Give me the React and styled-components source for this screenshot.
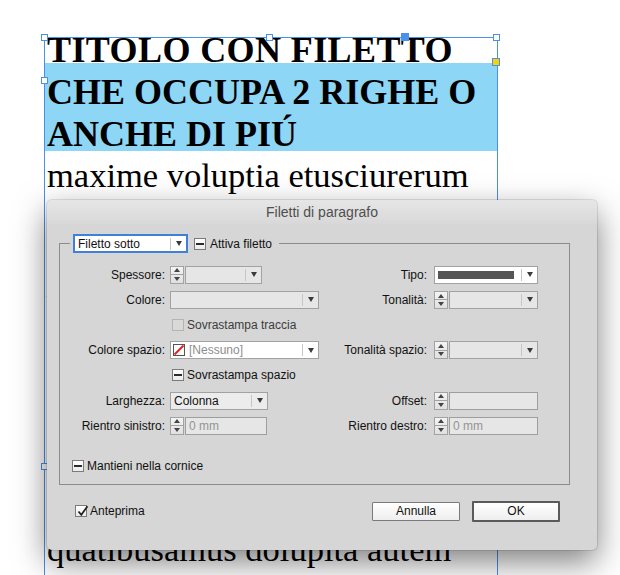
import React from 'react';
import styled, { createGlobalStyle } from 'styled-components';

const GlobalStyle = createGlobalStyle`
  html, body { margin: 0; padding: 0; background: #fff; }
  body { width: 620px; height: 575px; overflow: hidden; }
`;

const Page = styled.div`
  position: relative;
  width: 620px;
  height: 575px;
  overflow: hidden;
  background: #fff;
`;

/* document text frame */

const TextFrame = styled.div`
  margin: 37px 0 0 44px;
  width: 452px;
  height: 620px;
  border: 1px solid #4b8fe8;
  border-bottom: none;
  font-family: "Liberation Serif", "Times New Roman", serif;
  color: #000;
`;

const Title = styled.div`
  margin-top: -9px;
  font-size: 36px;
  font-weight: 700;
  line-height: 42px;
  white-space: nowrap;
`;

const TitleLine = styled.div`
  padding-left: 2px;
  letter-spacing: ${p => p.$ls || 0}px;
`;

const Highlight = styled.div`
  margin-top: -8px;
  padding-top: 8px;
  background: linear-gradient(#8ed6f5, #8ed6f5) top left / 100% calc(100% - 4px) no-repeat;
`;

const Body = styled.div`
  padding-left: 2px;
  font-size: 34.5px;
  line-height: 41.6px;
  white-space: nowrap;
`;

const Handle = styled.span`
  position: absolute;
  left: ${p => p.$x}px;
  top: ${p => p.$y}px;
  width: ${p => (p.$fill ? 8 : 7)}px;
  height: ${p => (p.$fill ? 8 : 7)}px;
  box-sizing: border-box;
  border: 1px solid #4b8fe8;
  background: ${p => p.$fill || '#fff'};
`;

/* dialog */

const Dialog = styled.div`
  position: absolute;
  left: 47px;
  top: 200px;
  width: 550px;
  height: 350px;
  box-sizing: border-box;
  background: #d6d6d6;
  border-radius: 5px;
  box-shadow: 0 0 0 1px rgba(0, 0, 0, 0.1), 0 12px 32px rgba(0, 0, 0, 0.5);
  font-family: "Liberation Sans", Arial, sans-serif;
  font-size: 12px;
  color: #111;
  display: flex;
  flex-direction: column;
`;

const TitleBar = styled.div`
  height: 24px;
  flex: none;
  display: flex;
  align-items: center;
  justify-content: center;
  font-size: 14px;
  color: #4f4f4f;
  border-radius: 5px 5px 0 0;
  background: linear-gradient(#e6e6e6, #d8d8d8);
`;

const Group = styled.fieldset`
  margin: 10px 0 0 12px;
  padding: 0 0 9px 0;
  width: 509px;
  min-width: 0;
  border: 1px solid #8c8c8c;
`;

const Legend = styled.legend`
  margin-left: 10px;
  padding: 0 7px 0 3px;
  display: flex;
  align-items: center;
`;

const Popup = styled.div`
  width: 115px;
  height: 19px;
  box-sizing: border-box;
  border: 2px solid #3f80d8;
  background: #fff;
  display: flex;
  align-items: center;
  padding-left: 3px;
  margin-right: 6px;
`;

const Grid = styled.div`
  padding-top: 9px;
  display: grid;
  grid-template-columns: 110px 149px 115px 104px;
  grid-auto-rows: 25.2px;
  align-items: center;
`;

const Label = styled.div`
  grid-column: ${p => p.$col};
  text-align: right;
  padding-right: ${p => (p.$col === 1 ? 5 : 7)}px;
  white-space: nowrap;
`;

const Cell = styled.div`
  grid-column: ${p => p.$col};
  display: flex;
  align-items: center;
  gap: 1px;
`;

const CheckLine = styled.label`
  grid-column: ${p => p.$col || 'auto'};
  display: flex;
  align-items: center;
  gap: ${p => p.$gap || 3}px;
  margin-left: ${p => p.$ml || 0}px;
  white-space: nowrap;
  color: ${p => (p.$muted ? '#3c3c3c' : '#111')};
`;

const Keep = styled(CheckLine)`
  margin: 19px 0 0 12px;
  height: 18px;
`;

const Box = styled.span`
  width: 12px;
  height: 12px;
  flex: none;
  box-sizing: border-box;
  border: 1px solid ${p => (p.$disabled ? '#b4b4b4' : '#7b7b7b')};
  background: ${p => (p.$disabled ? '#d9d9d9' : 'linear-gradient(#ffffff, #ebebeb)')};
  display: inline-flex;
  align-items: center;
  justify-content: center;
  position: relative;
`;

const Minus = styled.span`
  width: 8px;
  height: 2px;
  background: #2c2c2c;
`;

const Tick = styled.svg`
  position: absolute;
  left: 0;
  top: -2px;
`;

const Select = styled.div`
  width: ${p => p.$w}px;
  height: 18px;
  box-sizing: border-box;
  border: 1px solid #a2a2a2;
  background: ${p => (p.$white ? '#fff' : p.$light ? '#ececec' : '#e6e6e6')};
  display: flex;
  align-items: center;
`;

const Value = styled.div`
  flex: 1;
  display: flex;
  align-items: center;
  gap: 4px;
  padding-left: ${p => p.$pl ?? 3}px;
  color: ${p => (p.$muted ? '#8e8e8e' : '#111')};
  overflow: hidden;
  white-space: nowrap;
`;

const Arrow = styled.div`
  width: 15px;
  height: 12px;
  flex: none;
  border-left: 1px solid #c6c6c6;
  display: flex;
  align-items: center;
  justify-content: center;

  &::after {
    content: '';
    border-left: 3.5px solid transparent;
    border-right: 3.5px solid transparent;
    border-top: 5px solid #3a3a3a;
  }
`;

const LineSample = styled.span`
  width: 76px;
  height: 8px;
  background: #555;
`;

const Spinner = styled.div`
  width: 14px;
  height: 18px;
  flex: none;
  box-sizing: border-box;
  border: 1px solid #a2a2a2;
  background: linear-gradient(#f4f4f4, #e0e0e0);
  display: flex;
  flex-direction: column;
`;

const SpinHalf = styled.div`
  flex: 1;
  display: flex;
  align-items: center;
  justify-content: center;

  & + & {
    border-top: 1px solid #a2a2a2;
  }

  &::after {
    content: '';
    border-left: 3px solid transparent;
    border-right: 3px solid transparent;
    ${p => (p.$down ? 'border-top: 4px solid #444;' : 'border-bottom: 4px solid #444;')}
  }
`;

const Field = styled.div`
  width: ${p => p.$w}px;
  height: 18px;
  box-sizing: border-box;
  border: 1px solid #9e9e9e;
  background: #e6e6e6;
  color: #949494;
  padding-left: 3px;
  display: flex;
  align-items: center;
`;

const Footer = styled.div`
  height: 52px;
  display: flex;
  align-items: center;
  padding: 0 37px 0 28px;
`;

const Buttons = styled.div`
  margin-left: auto;
  display: flex;
  align-items: center;
  gap: 12px;
`;

const Button = styled.button`
  width: 88px;
  height: ${p => (p.$default ? 21 : 19)}px;
  box-sizing: border-box;
  padding: 0;
  border: ${p => (p.$default ? '2px solid #5a5a5a' : '1px solid #7a7a7a')};
  border-radius: 1px;
  background: linear-gradient(#ffffff, #eeeeee);
  font-family: "Liberation Sans", Arial, sans-serif;
  font-size: 12px;
  color: #111;
`;

const Spin = () => (
  <Spinner>
    <SpinHalf />
    <SpinHalf $down />
  </Spinner>
);

const Check = ({ mark, disabled }) => (
  <Box $disabled={disabled}>
    {mark === 'minus' && <Minus />}
    {mark === 'tick' && (
      <Tick width="14" height="14" viewBox="0 0 14 14">
        <path d="M2.5 7.5 L5.3 10.8 L11.5 2.2" fill="none" stroke="#1e1e1e" strokeWidth="1.7" />
      </Tick>
    )}
  </Box>
);

const NoneSwatch = () => (
  <svg width="12" height="12" viewBox="0 0 12 12">
    <rect x="0.5" y="0.5" width="11" height="11" fill="#fff" stroke="#555" />
    <path d="M1.5 10.5 L10.5 1.5" stroke="#e8201f" strokeWidth="2" />
  </svg>
);

const bodyLines = [
  'maxime voluptia etusciurerum',
  'audae volorer ferchil ipsum',
  'tem quiatus modi ut volupta',
  'vendae nobis eatur sequam',
  'cuptae nis as aute pro odit',
  'sequi ut as maximus dolorum',
  'core sitatem explabo ut et',
  'Iquam nonsequi odit ulpa',
  'Ilab ium harum quodis',
  'quatibusamus dolupita autem',
];

export default function App() {
  return (
    <Page>
      <GlobalStyle />
      <TextFrame>
        <Title>
          <TitleLine $ls={0.4}>TITOLO CON FILETTO</TitleLine>
          <Highlight>
            <TitleLine>CHE OCCUPA 2 RIGHE O</TitleLine>
            <TitleLine>ANCHE DI PIÚ</TitleLine>
          </Highlight>
        </Title>
        <Body>
          {bodyLines.map(l => (
            <div key={l}>{l}</div>
          ))}
        </Body>
      </TextFrame>

      <Handle $x={41} $y={34} />
      <Handle $x={266} $y={34} />
      <Handle $x={493} $y={34} />
      <Handle $x={401} $y={33} $fill="#4b8fe8" />
      <Handle $x={492} $y={58} $fill="#f7d400" />
      <Handle $x={41} $y={77} />
      <Handle $x={41} $y={463} />

      <Dialog>
        <TitleBar>Filetti di paragrafo</TitleBar>
        <Group>
          <Legend>
            <Popup>
              <Value $pl={0}>Filetto sotto</Value>
              <Arrow />
            </Popup>
            <CheckLine $gap={4}>
              <Check mark="minus" />
              Attiva filetto
            </CheckLine>
          </Legend>

          <Grid>
            <Label $col={1}>Spessore:</Label>
            <Cell $col={2}>
              <Spin />
              <Select $w={77}>
                <Value />
                <Arrow />
              </Select>
            </Cell>
            <Label $col={3}>Tipo:</Label>
            <Cell $col={4}>
              <Select $w={104} $white>
                <Value>
                  <LineSample />
                </Value>
                <Arrow />
              </Select>
            </Cell>

            <Label $col={1}>Colore:</Label>
            <Cell $col={2}>
              <Select $w={149}>
                <Value />
                <Arrow />
              </Select>
            </Cell>
            <Label $col={3}>Tonalità:</Label>
            <Cell $col={4}>
              <Spin />
              <Select $w={89}>
                <Value />
                <Arrow />
              </Select>
            </Cell>

            <CheckLine $col="2 / 4" $ml={2} $muted>
              <Check disabled />
              Sovrastampa traccia
            </CheckLine>

            <Label $col={1}>Colore spazio:</Label>
            <Cell $col={2}>
              <Select $w={149} $white>
                <Value $pl={2} $muted>
                  <NoneSwatch />
                  [Nessuno]
                </Value>
                <Arrow />
              </Select>
            </Cell>
            <Label $col={3}>Tonalità spazio:</Label>
            <Cell $col={4}>
              <Spin />
              <Select $w={89}>
                <Value />
                <Arrow />
              </Select>
            </Cell>

            <CheckLine $col="2 / 4" $ml={2}>
              <Check mark="minus" />
              Sovrastampa spazio
            </CheckLine>

            <Label $col={1}>Larghezza:</Label>
            <Cell $col={2}>
              <Select $w={98} $light>
                <Value>Colonna</Value>
                <Arrow />
              </Select>
            </Cell>
            <Label $col={3}>Offset:</Label>
            <Cell $col={4}>
              <Spin />
              <Field $w={89} />
            </Cell>

            <Label $col={1}>Rientro sinistro:</Label>
            <Cell $col={2}>
              <Spin />
              <Field $w={82}>0 mm</Field>
            </Cell>
            <Label $col={3}>Rientro destro:</Label>
            <Cell $col={4}>
              <Spin />
              <Field $w={89}>0 mm</Field>
            </Cell>
          </Grid>

          <Keep>
            <Check mark="minus" />
            Mantieni nella cornice
          </Keep>
        </Group>

        <Footer>
          <CheckLine>
            <Check mark="tick" />
            Anteprima
          </CheckLine>
          <Buttons>
            <Button>Annulla</Button>
            <Button $default>OK</Button>
          </Buttons>
        </Footer>
      </Dialog>
    </Page>
  );
}
